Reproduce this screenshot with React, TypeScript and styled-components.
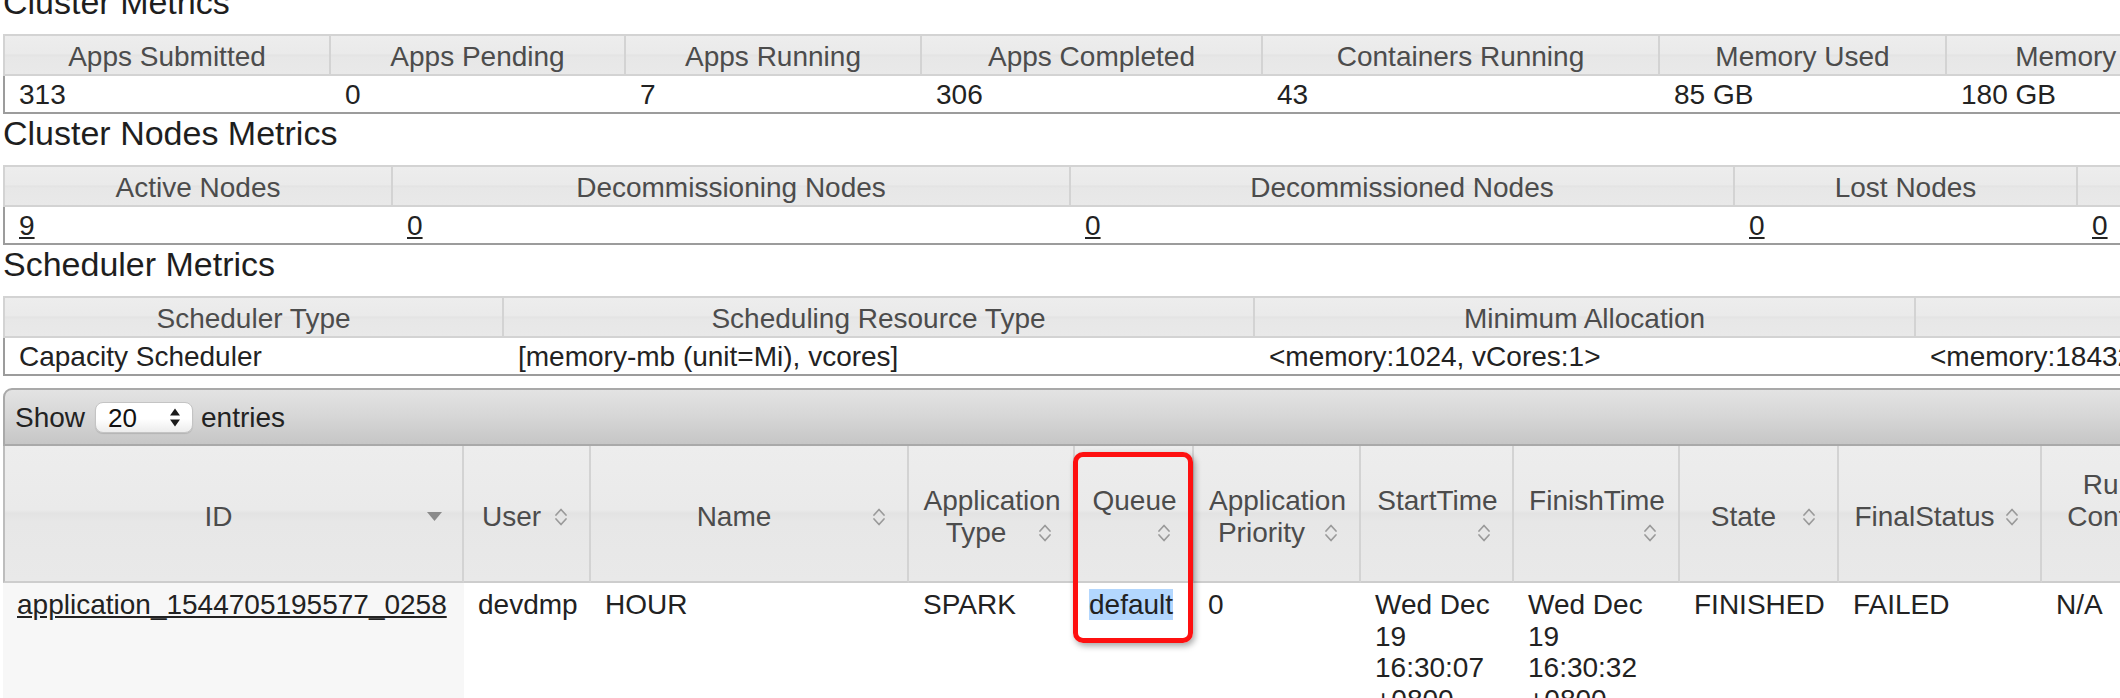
import React from 'react';
import styled, { createGlobalStyle } from 'styled-components';

const GlobalStyle = createGlobalStyle`
  *, *::before, *::after { box-sizing: border-box; }
  html, body { margin: 0; padding: 0; overflow: hidden; background: #ffffff; }
  body {
    font-family: "Liberation Sans", Arial, Helvetica, sans-serif;
    font-size: 28px;
    color: #222222;
  }
`;

const glass =
  'linear-gradient(to bottom, #ededed 0%, #eaeaea 47%, #e3e3e3 50%, #e7e7e7 56%, #e9e9e9 100%)';

const Page = styled.div`
  margin-top: -17px;
  padding-left: 3px;
`;

const SectionTitle = styled.h3`
  margin: 0 0 12px;
  font-size: 34px;
  font-weight: normal;
  line-height: 39px;
  color: #1e1e1e;
  white-space: nowrap;
`;

const InfoTable = styled.table<{ $width: number }>`
  width: ${(p) => p.$width}px;
  border-collapse: separate;
  border-spacing: 0;
  table-layout: fixed;
`;

const Col = styled.col<{ $w: number }>`
  width: ${(p) => p.$w}px;
`;

const InfoHead = styled.th`
  padding: 5px 14px 2px;
  line-height: 31px;
  font-weight: normal;
  color: #4c4c4c;
  text-align: center;
  white-space: nowrap;
  overflow: hidden;
  background: ${glass};
  border-top: 2px solid #d3d3d3;
  border-bottom: 2px solid #d3d3d3;
  border-right: 2px solid #d3d3d3;
  &:first-child { border-left: 2px solid #d3d3d3; }
`;

const InfoCell = styled.td`
  padding: 3px 14px 2px;
  line-height: 31px;
  text-align: left;
  white-space: nowrap;
  overflow: hidden;
  color: #222222;
  border-bottom: 2px solid #9c9c9c;
  &:first-child { border-left: 2px solid #9c9c9c; }
`;

const NodeLink = styled.a`
  color: #222222;
  text-decoration: underline;
`;

const Toolbar = styled.div<{ $width: number }>`
  width: ${(p) => p.$width}px;
  margin-top: 12px;
  height: 58px;
  display: flex;
  align-items: center;
  padding: 0 10px;
  border: 2px solid #a9a9a9;
  border-radius: 9px 9px 0 0;
  background: linear-gradient(to bottom, #e3e3e3 0%, #d6d6d6 50%, #c6c6c6 100%);
  color: #222222;
`;

const ToolbarLabel = styled.span`
  line-height: 31px;
  white-space: nowrap;
`;

const SelectWrap = styled.span`
  position: relative;
  display: inline-flex;
  margin: 0 8px 0 10px;
`;

const PageSizeSelect = styled.select`
  appearance: none;
  -webkit-appearance: none;
  width: 98px;
  height: 31px;
  padding: 0 0 0 12px;
  border: 1px solid #c4c4c4;
  border-radius: 8px;
  background: linear-gradient(to bottom, #ffffff 0%, #ffffff 55%, #ececec 100%);
  box-shadow: 0 1px 1px rgba(0, 0, 0, 0.12);
  font-family: "Liberation Sans", Arial, Helvetica, sans-serif;
  font-size: 26px;
  color: #111111;
`;

const SelectArrows = styled.svg`
  position: absolute;
  right: 13px;
  top: 6px;
  pointer-events: none;
`;

const AppsTable = styled.table<{ $width: number }>`
  width: ${(p) => p.$width}px;
  border-collapse: separate;
  border-spacing: 0;
  table-layout: fixed;
`;

const AppsHead = styled.th`
  position: relative;
  height: 137px;
  padding: 6px 12px 0 14px;
  line-height: 32px;
  font-weight: normal;
  color: #4c4c4c;
  text-align: center;
  vertical-align: middle;
  background: ${glass};
  border-right: 2px solid #d3d3d3;
  border-bottom: 2px solid #cdcdcd;
  &:first-child { border-left: 2px solid #bdbdbd; }
`;

const SortIcon = styled.span`
  float: right;
  width: 32px;
  height: 32px;
  display: flex;
  align-items: center;
  justify-content: center;
`;

const AppsCell = styled.td<{ $sorted?: boolean }>`
  padding: 6px 12px 0 14px;
  line-height: 31.5px;
  vertical-align: top;
  text-align: left;
  color: #222222;
  background: ${(p) => (p.$sorted ? '#f7f7f7' : '#ffffff')};
`;

const AppLink = styled.a`
  color: #222222;
  text-decoration: underline;
  white-space: nowrap;
`;

const Selected = styled.span`
  background: #b3d7fe;
`;

const Annotation = styled.span`
  position: absolute;
  left: -2px;
  top: 6px;
  width: 120px;
  height: 191px;
  border: 5px solid #fe1010;
  border-radius: 10px;
  box-shadow: 2px 3px 6px rgba(0, 0, 0, 0.35);
  pointer-events: none;
  z-index: 3;
`;

type InfoColumn = { label: string; width: number };

const sum = (cols: { width: number }[]) => cols.reduce((a, c) => a + c.width, 0);

const MetricsTable: React.FC<{ columns: InfoColumn[]; values: React.ReactNode[] }> = ({ columns, values }) => (
  <InfoTable $width={sum(columns)}>
    <colgroup>
      {columns.map((c) => (
        <Col key={c.label} $w={c.width} />
      ))}
    </colgroup>
    <thead>
      <tr>
        {columns.map((c) => (
          <InfoHead key={c.label}>{c.label}</InfoHead>
        ))}
      </tr>
    </thead>
    <tbody>
      <tr>
        {values.map((v, i) => (
          <InfoCell key={i}>{v}</InfoCell>
        ))}
      </tr>
    </tbody>
  </InfoTable>
);

const clusterColumns: InfoColumn[] = [
  { label: 'Apps Submitted', width: 328 },
  { label: 'Apps Pending', width: 295 },
  { label: 'Apps Running', width: 296 },
  { label: 'Apps Completed', width: 341 },
  { label: 'Containers Running', width: 397 },
  { label: 'Memory Used', width: 287 },
  { label: 'Memory Total', width: 306 },
  { label: 'Memory Reserved', width: 330 },
  { label: 'VCores Used', width: 260 },
  { label: 'VCores Total', width: 260 },
  { label: 'VCores Reserved', width: 300 },
];
const clusterValues = ['313', '0', '7', '306', '43', '85 GB', '180 GB', '0 B', '43', '72', '0'];

const nodeColumns: InfoColumn[] = [
  { label: 'Active Nodes', width: 390 },
  { label: 'Decommissioning Nodes', width: 678 },
  { label: 'Decommissioned Nodes', width: 664 },
  { label: 'Lost Nodes', width: 343 },
  { label: 'Unhealthy Nodes', width: 380 },
  { label: 'Rebooted Nodes', width: 380 },
  { label: 'Shutdown Nodes', width: 380 },
];
const nodeValues = ['9', '0', '0', '0', '0', '0', '0'].map((v, i) => (
  <NodeLink key={i} href="#">
    {v}
  </NodeLink>
));

const schedulerColumns: InfoColumn[] = [
  { label: 'Scheduler Type', width: 501 },
  { label: 'Scheduling Resource Type', width: 751 },
  { label: 'Minimum Allocation', width: 661 },
  { label: 'Maximum Allocation', width: 700 },
  { label: 'Maximum Cluster Application Priority', width: 600 },
];
const schedulerValues = [
  'Capacity Scheduler',
  '[memory-mb (unit=Mi), vcores]',
  '<memory:1024, vCores:1>',
  '<memory:184320, vCores:48>',
  '0',
];

const Chevrons = () => (
  <svg width="14" height="22" viewBox="0 0 14 22">
    <polyline
      points="2,9 7,3.5 12,9"
      fill="none"
      stroke="#9a9a9a"
      strokeWidth="1.7"
      strokeLinejoin="round"
      strokeLinecap="round"
    />
    <polyline
      points="2,13 7,18.5 12,13"
      fill="none"
      stroke="#9a9a9a"
      strokeWidth="1.7"
      strokeLinejoin="round"
      strokeLinecap="round"
    />
  </svg>
);

const DownTriangle = () => (
  <svg width="15" height="9" viewBox="0 0 15 9">
    <polygon points="0,0 15,0 7.5,9" fill="#8a8a8a" />
  </svg>
);

type AppColumn = { label: string; width: number; sort: 'desc' | 'both'; mark?: boolean };

const appColumns: AppColumn[] = [
  { label: 'ID', width: 461, sort: 'desc' },
  { label: 'User', width: 127, sort: 'both' },
  { label: 'Name', width: 318, sort: 'both' },
  { label: 'Application Type', width: 166, sort: 'both' },
  { label: 'Queue', width: 119, sort: 'both', mark: true },
  { label: 'Application Priority', width: 167, sort: 'both' },
  { label: 'StartTime', width: 153, sort: 'both' },
  { label: 'FinishTime', width: 166, sort: 'both' },
  { label: 'State', width: 159, sort: 'both' },
  { label: 'FinalStatus', width: 203, sort: 'both' },
  { label: 'Running Containers', width: 186, sort: 'both' },
  { label: 'Allocated CPU VCores', width: 186, sort: 'both' },
  { label: 'Allocated Memory MB', width: 186, sort: 'both' },
  { label: '% of Queue', width: 150, sort: 'both' },
  { label: '% of Cluster', width: 150, sort: 'both' },
  { label: 'Progress', width: 180, sort: 'both' },
  { label: 'Tracking UI', width: 180, sort: 'both' },
];

const appRow: React.ReactNode[] = [
  <AppLink href="#">application_1544705195577_0258</AppLink>,
  'devdmp',
  'HOUR',
  'SPARK',
  <Selected>default</Selected>,
  '0',
  'Wed Dec 19 16:30:07 +0800 2018',
  'Wed Dec 19 16:30:32 +0800 2018',
  'FINISHED',
  'FAILED',
  'N/A',
  'N/A',
  'N/A',
  '0.0',
  '0.0',
  '',
  'History',
];

export default function App() {
  const appsWidth = sum(appColumns);
  return (
    <>
      <GlobalStyle />
      <Page>
        <SectionTitle>Cluster Metrics</SectionTitle>
        <MetricsTable columns={clusterColumns} values={clusterValues} />
        <SectionTitle>Cluster Nodes Metrics</SectionTitle>
        <MetricsTable columns={nodeColumns} values={nodeValues} />
        <SectionTitle>Scheduler Metrics</SectionTitle>
        <MetricsTable columns={schedulerColumns} values={schedulerValues} />

        <Toolbar $width={appsWidth}>
          <ToolbarLabel>Show</ToolbarLabel>
          <SelectWrap>
            <PageSizeSelect defaultValue="20">
              <option value="20">20</option>
              <option value="40">40</option>
              <option value="60">60</option>
              <option value="80">80</option>
              <option value="100">100</option>
            </PageSizeSelect>
            <SelectArrows width="10" height="19" viewBox="0 0 10 19">
              <polygon points="0,7.5 5,0.5 10,7.5" fill="#1a1a1a" />
              <polygon points="0,11.5 5,18.5 10,11.5" fill="#1a1a1a" />
            </SelectArrows>
          </SelectWrap>
          <ToolbarLabel>entries</ToolbarLabel>
        </Toolbar>

        <AppsTable $width={appsWidth}>
          <colgroup>
            {appColumns.map((c) => (
              <Col key={c.label} $w={c.width} />
            ))}
          </colgroup>
          <thead>
            <tr>
              {appColumns.map((c) => (
                <AppsHead key={c.label}>
                  {c.label}
                  <SortIcon>{c.sort === 'desc' ? <DownTriangle /> : <Chevrons />}</SortIcon>
                  {c.mark && <Annotation />}
                </AppsHead>
              ))}
            </tr>
          </thead>
          <tbody>
            <tr>
              {appRow.map((v, i) => (
                <AppsCell key={i} $sorted={i === 0}>
                  {v}
                </AppsCell>
              ))}
            </tr>
          </tbody>
        </AppsTable>
      </Page>
    </>
  );
}
